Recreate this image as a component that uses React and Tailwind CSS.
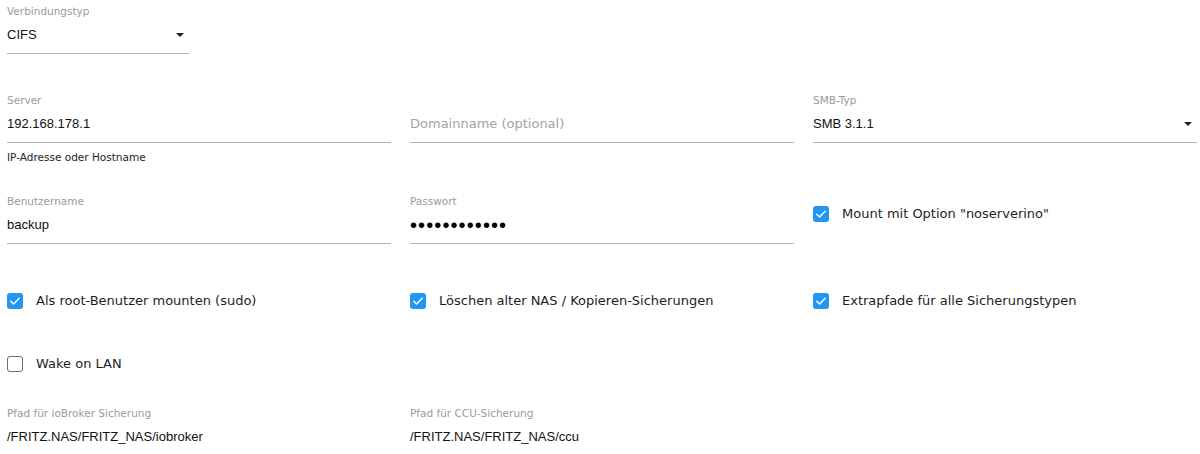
import React from "react";

const lab = "font-['DejaVu_Sans',sans-serif] text-[10.5px] leading-[14px] text-[#9b9b9b] whitespace-nowrap";
const val = "font-['Liberation_Sans',Arial,sans-serif] text-[13px] leading-[18px] text-[#111] whitespace-nowrap";

function Arrow() {
  return (
    <svg width="8" height="4" viewBox="0 0 8 4" className="mr-[5px] shrink-0">
      <polygon points="0,0 8,0 4,4" fill="#222" />
    </svg>
  );
}

function Field({ label, value, placeholder, select, helper, width, dots }) {
  return (
    <div className={width || "w-full"}>
      <div className={lab}>{label || "\u00a0"}</div>
      <div className="mt-[8px] pb-[9px] border-b border-[#b3b3b3] flex items-center justify-between h-[28px]">
        {dots ? (
          <span className="font-['Liberation_Sans',Arial,sans-serif] text-[20px] leading-[18px] tracking-[1.1px] text-black">
            ••••••••••••
          </span>
        ) : placeholder ? (
          <span className="font-['DejaVu_Sans',sans-serif] text-[13px] leading-[18px] text-[#a3a3a3] whitespace-nowrap">
            {placeholder}
          </span>
        ) : (
          <span className={val}>{value}</span>
        )}
        {select && <Arrow />}
      </div>
      {helper && (
        <div className="mt-[7px] font-['DejaVu_Sans',sans-serif] text-[10.5px] leading-[14px] text-[#222] whitespace-nowrap">
          {helper}
        </div>
      )}
    </div>
  );
}

function Check({ checked, label, className }) {
  return (
    <div className={"flex items-center h-[24px] " + (className || "")}>
      {checked ? (
        <div className="w-[16px] h-[16px] rounded-[3px] bg-[#2196f3] flex items-center justify-center shrink-0">
          <svg width="16" height="16" viewBox="0 0 16 16">
            <polyline points="3.8,8.3 6.6,11 12.2,5.2" fill="none" stroke="#fff" strokeWidth="1.5" strokeLinecap="round" strokeLinejoin="round" />
          </svg>
        </div>
      ) : (
        <div className="w-[16px] h-[16px] rounded-[3px] border-[1.5px] border-[#6e6e6e] shrink-0" />
      )}
      <span className="ml-[13px] font-['DejaVu_Sans',sans-serif] text-[13px] leading-[24px] text-[#1d1d1d] whitespace-nowrap">
        {label}
      </span>
    </div>
  );
}

export default function App() {
  return (
    <div className="w-[1200px] h-[454px] overflow-hidden bg-white pl-[7px] pr-[3px] pt-[4px]">
      <div className="grid grid-cols-3 gap-x-[19px]">
        <Field label="Verbindungstyp" value="CIFS" select width="w-[182px]" />
      </div>

      <div className="grid grid-cols-3 gap-x-[19px] mt-[38.5px]">
        <Field label="Server" value="192.168.178.1" helper="IP-Adresse oder Hostname" />
        <Field placeholder="Domainname (optional)" />
        <Field label="SMB-Typ" value="SMB 3.1.1" select />
      </div>

      <div className="grid grid-cols-3 gap-x-[19px] mt-[30px]">
        <Field label="Benutzername" value="backup" />
        <Field label="Passwort" dots />
        <Check checked label={'Mount mit Option "noserverino"'} className="mt-[8px]" />
      </div>

      <div className="grid grid-cols-3 gap-x-[19px] mt-[45.5px]">
        <Check checked label="Als root-Benutzer mounten (sudo)" />
        <Check checked label="Löschen alter NAS / Kopieren-Sicherungen" />
        <Check checked label="Extrapfade für alle Sicherungstypen" />
      </div>

      <div className="grid grid-cols-3 gap-x-[19px] mt-[38.5px]">
        <Check label="Wake on LAN" />
      </div>

      <div className="grid grid-cols-3 gap-x-[19px] mt-[30.5px]">
        <Field label="Pfad für ioBroker Sicherung" value="/FRITZ.NAS/FRITZ_NAS/iobroker" />
        <Field label="Pfad für CCU-Sicherung" value="/FRITZ.NAS/FRITZ_NAS/ccu" />
      </div>
    </div>
  );
}
